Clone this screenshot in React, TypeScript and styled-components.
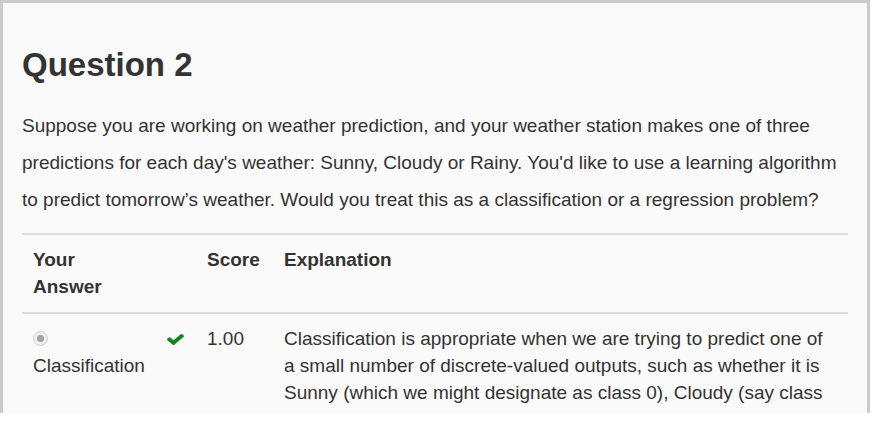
import React from "react";
import styled, { createGlobalStyle } from "styled-components";

const GlobalStyle = createGlobalStyle`
  html, body { margin: 0; padding: 0; background: #ffffff; }
  body {
    font-family: "Liberation Sans", Arial, Helvetica, sans-serif;
    color: #333333;
  }
`;

const Panel = styled.section`
  box-sizing: border-box;
  width: 870px;
  height: 413px;
  overflow: hidden;
  background: #fafafa;
  border: 3px solid #cbcbcb;
  border-bottom: none;
  padding: 44px 19px 0;
`;

const Title = styled.h2`
  margin: 0 0 25px;
  font-size: 33px;
  line-height: 1.1;
  font-weight: 700;
  color: #333333;
`;

const Prompt = styled.p`
  margin: 0 0 15px;
  font-size: 19px;
  line-height: 36.67px;
`;

const Table = styled.table`
  width: 100%;
  border-collapse: collapse;
  table-layout: fixed;
  font-size: 19px;
  line-height: 1.428571;
`;

const HeadCell = styled.th`
  text-align: left;
  font-weight: 700;
  vertical-align: top;
  padding: 11px;
  border-top: 2px solid #dddddd;
  border-bottom: 2px solid #dddddd;
`;

const Cell = styled.td`
  vertical-align: top;
  padding: 11px;
`;

const Radio = styled.input`
  appearance: none;
  -webkit-appearance: none;
  box-sizing: border-box;
  display: inline-block;
  width: 15px;
  height: 15px;
  margin: 0 6px 0 0;
  vertical-align: -1px;
  border-radius: 50%;
  border: 1px solid #cfcfcf;
  background: radial-gradient(circle, #a4a4a4 0 3.3px, #efefef 3.9px);
`;

const CheckIcon = styled.svg`
  display: block;
  margin-top: 9px;
  width: 17px;
  height: 11px;
  fill: #12881a;
`;

export default function App() {
  return (
    <>
      <GlobalStyle />
      <Panel>
        <Title>Question 2</Title>
        <Prompt>
          Suppose you are working on weather prediction, and your weather station makes one of three
          predictions for each day's weather: Sunny, Cloudy or Rainy. You'd like to use a learning
          algorithm to predict tomorrow’s weather. Would you treat this as a classification or a
          regression problem?
        </Prompt>
        <Table>
          <colgroup>
            <col style={{ width: 134 }} />
            <col style={{ width: 40 }} />
            <col style={{ width: 77 }} />
            <col />
          </colgroup>
          <thead>
            <tr>
              <HeadCell>Your Answer</HeadCell>
              <HeadCell />
              <HeadCell>Score</HeadCell>
              <HeadCell>Explanation</HeadCell>
            </tr>
          </thead>
          <tbody>
            <tr>
              <Cell>
                <Radio type="radio" checked disabled readOnly /> Classification
              </Cell>
              <Cell>
                <CheckIcon viewBox="121 334 1550 1188" preserveAspectRatio="none" aria-label="correct">
                  <path d="M1671 566q0 40-28 68l-724 724-136 136q-28 28-68 28t-68-28l-136-136-362-362q-28-28-28-68t28-68l136-136q28-28 68-28t68 28l294 295 656-657q28-28 68-28t68 28l136 136q28 28 28 68z" />
                </CheckIcon>
              </Cell>
              <Cell>1.00</Cell>
              <Cell>
                Classification is appropriate when we are trying to predict one of a small number of
                discrete-valued outputs, such as whether it is Sunny (which we might designate as class
                0), Cloudy (say class 1) or Rainy (class 2).
              </Cell>
            </tr>
          </tbody>
        </Table>
      </Panel>
    </>
  );
}
